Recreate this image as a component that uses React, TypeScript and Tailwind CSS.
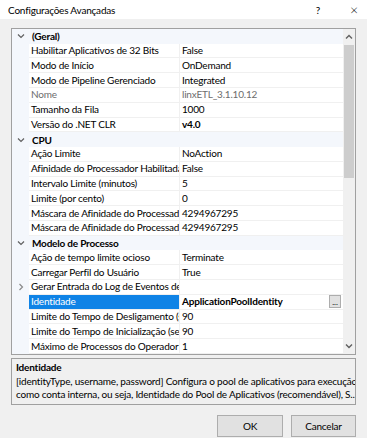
import React from "react";

type Row =
  | { kind: "cat"; label: string }
  | {
      kind: "prop";
      label: string;
      value: string;
      bold?: boolean;
      gray?: boolean;
      expander?: boolean;
      selected?: boolean;
      button?: boolean;
    };

const rows: Row[] = [
  { kind: "cat", label: "(Geral)" },
  { kind: "prop", label: "Habilitar Aplicativos de 32 Bits", value: "False" },
  { kind: "prop", label: "Modo de Início", value: "OnDemand" },
  { kind: "prop", label: "Modo de Pipeline Gerenciado", value: "Integrated" },
  { kind: "prop", label: "Nome", value: "linxETL_3.1.10.12", gray: true },
  { kind: "prop", label: "Tamanho da Fila", value: "1000" },
  { kind: "prop", label: "Versão do .NET CLR", value: "v4.0", bold: true },
  { kind: "cat", label: "CPU" },
  { kind: "prop", label: "Ação Limite", value: "NoAction" },
  { kind: "prop", label: "Afinidade do Processador Habilitada", value: "False" },
  { kind: "prop", label: "Intervalo Limite (minutos)", value: "5" },
  { kind: "prop", label: "Limite (por cento)", value: "0" },
  { kind: "prop", label: "Máscara de Afinidade do Processador", value: "4294967295" },
  { kind: "prop", label: "Máscara de Afinidade do Processador (64 bits)", value: "4294967295" },
  { kind: "cat", label: "Modelo de Processo" },
  { kind: "prop", label: "Ação de tempo limite ocioso", value: "Terminate" },
  { kind: "prop", label: "Carregar Perfil do Usuário", value: "True" },
  { kind: "prop", label: "Gerar Entrada do Log de Eventos de Processo", value: "", expander: true },
  { kind: "prop", label: "Identidade", value: "ApplicationPoolIdentity", bold: true, selected: true, button: true },
  { kind: "prop", label: "Limite do Tempo de Desligamento (segundos)", value: "90" },
  { kind: "prop", label: "Limite do Tempo de Inicialização (segundos)", value: "90" },
  { kind: "prop", label: "Máximo de Processos do Operador", value: "1" },
];

function ChevronDown() {
  return (
    <svg width="8" height="6" viewBox="0 0 8 6" fill="none">
      <path d="M1 1.5 L4 4.5 L7 1.5" stroke="#606060" strokeWidth="1.2" />
    </svg>
  );
}

function ChevronRight() {
  return (
    <svg width="6" height="8" viewBox="0 0 6 8" fill="none">
      <path d="M1.5 1 L4.5 4 L1.5 7" stroke="#8a8a8a" strokeWidth="1.2" />
    </svg>
  );
}

function GridRow({ row }: { row: Row }) {
  if (row.kind === "cat") {
    return (
      <div className="flex h-[14.8px] items-center bg-[#f4f7fc]">
        <div className="flex w-[17px] justify-center">
          <ChevronDown />
        </div>
        <span className="pl-[3px] font-bold leading-none">{row.label}</span>
      </div>
    );
  }
  return (
    <div className="flex h-[14.8px]">
      <div className="flex w-[17px] shrink-0 items-center justify-center bg-[#f4f7fc]">
        {row.expander ? <ChevronRight /> : null}
      </div>
      <div
        className={`flex w-[151px] shrink-0 items-center overflow-hidden whitespace-nowrap border-b border-r border-[#f0f0f0] pl-[2px] ${
          row.selected ? "bg-[#0f83e6] text-white" : row.gray ? "text-[#6d6d6d]" : ""
        }`}
      >
        {row.label}
      </div>
      <div
        className={`flex flex-1 items-center justify-between overflow-hidden whitespace-nowrap border-b border-[#f0f0f0] pl-[2px] ${
          row.bold ? "font-bold" : ""
        } ${row.gray ? "text-[#6d6d6d]" : ""}`}
      >
        <span>{row.value}</span>
        {row.button ? (
          <span className="mr-[2px] flex h-[13px] w-[12px] items-end justify-center border border-[#adadad] bg-[#e1e1e1] text-[8px] font-normal leading-[9px] tracking-normal">
            ...
          </span>
        ) : null}
      </div>
    </div>
  );
}

export default function App() {
  return (
    <div
      className="flex h-[438px] w-[367px] flex-col bg-[#f0f0f0] text-[10px] tracking-[-0.2px] text-black"
      style={{ fontFamily: "Lato, 'Noto Sans', sans-serif" }}
    >
      <div className="flex h-[19px] items-center justify-between bg-white pl-[8px] pr-[9px]">
        <span className="leading-none">Configurações Avançadas</span>
        <div className="flex items-center gap-[30px]">
          <span className="leading-none">?</span>
          <span className="text-[14px] font-light leading-none">×</span>
        </div>
      </div>

      <div className="flex flex-1 flex-col px-[11px] pt-[9px]">
        <div className="flex h-[327px] border border-[#a0a0a0] bg-white">
          <div className="flex flex-1 flex-col">
            {rows.map((row, i) => (
              <GridRow key={i} row={row} />
            ))}
          </div>
          <div className="flex w-[12px] flex-col bg-[#f0f0f0]">
            <div className="flex h-[16px] items-center justify-center">
              <svg width="8" height="6" viewBox="0 0 8 6" fill="none">
                <path d="M1 4.5 L4 1.5 L7 4.5" stroke="#606060" strokeWidth="1.4" />
              </svg>
            </div>
            <div className="mx-[1px] h-[133px] bg-[#cdcdcd]" />
            <div className="flex-1" />
            <div className="flex h-[16px] items-center justify-center">
              <svg width="8" height="6" viewBox="0 0 8 6" fill="none">
                <path d="M1 1.5 L4 4.5 L7 1.5" stroke="#606060" strokeWidth="1.4" />
              </svg>
            </div>
          </div>
        </div>

        <div className="mt-[3px] flex h-[47px] flex-col overflow-hidden border border-[#a0a0a0] px-[4px] pt-[2px] leading-[13.5px]">
          <span className="font-bold">Identidade</span>
          <span className="whitespace-nowrap">
            [identityType, username, password] Configura o pool de aplicativos para execução
          </span>
          <span className="whitespace-nowrap">
            como conta interna, ou seja, Identidade do Pool de Aplicativos (recomendável), S...
          </span>
        </div>

        <div className="mt-[10px] flex justify-end gap-[8px]">
          <button className="h-[22px] w-[66px] border border-[#adadad] bg-[#e1e1e1]">OK</button>
          <button className="h-[22px] w-[65px] border border-[#adadad] bg-[#e1e1e1]">Cancelar</button>
        </div>
      </div>
    </div>
  );
}
